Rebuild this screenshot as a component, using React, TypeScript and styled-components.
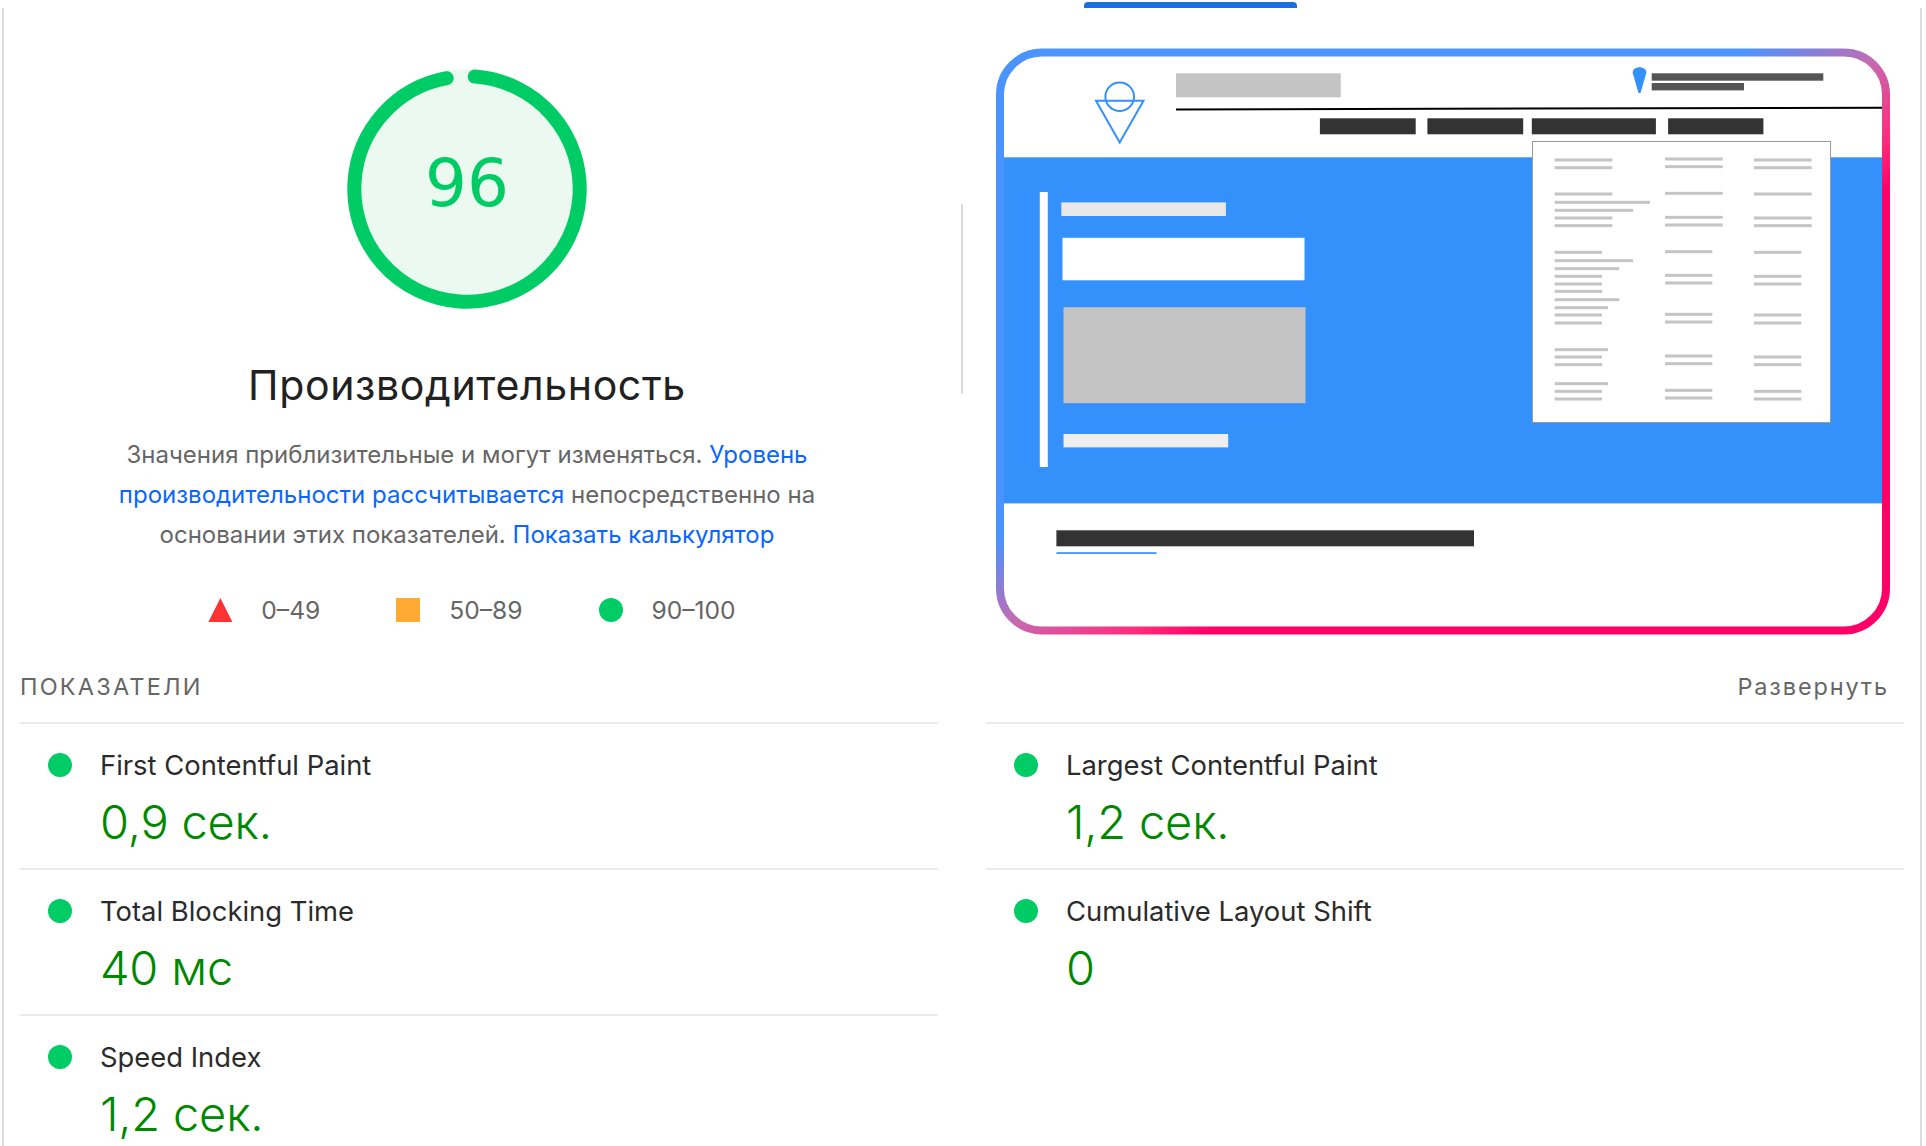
import React from 'react';
import styled, { createGlobalStyle } from 'styled-components';

const Global = createGlobalStyle`
  html, body { margin: 0; padding: 0; background: #fff; }
  * { box-sizing: border-box; }
`;

const Page = styled.div`
  width: 1926px;
  height: 1146px;
  overflow: hidden;
  padding-left: 4px;
  font-family: Inter, 'Noto Sans', sans-serif;
  background:
    linear-gradient(#dcdcdc, #dcdcdc) 2px 8px / 2px 100% no-repeat,
    linear-gradient(#dcdcdc, #dcdcdc) 1920px 8px / 2px 100% no-repeat,
    #fff;
`;
const Top = styled.section`
  display: flex;
  height: 658px;
`;
const ScoreColumn = styled.div`
  width: 926px;
  padding-top: 69px;
  display: flex;
  flex-direction: column;
  align-items: center;
`;
const Gauge = styled.div`
  position: relative;
  width: 240px;
  height: 240px;
  svg { display: block; }
`;
const ScoreValue = styled.span`
  position: absolute;
  inset: 0;
  display: flex;
  align-items: center;
  justify-content: center;
  padding-bottom: 11px;
  font-family: 'DejaVu Sans', sans-serif;
  font-size: 66px;
  color: #00cc66;
`;
const Title = styled.h1`
  margin: 46px 0 0;
  font-size: 41px;
  line-height: 60px;
  font-weight: 400;
  letter-spacing: 0.65px;
  color: #212121;
`;
const Description = styled.p`
  margin: 20px 0 0;
  font-size: 24px;
  line-height: 40px;
  text-align: center;
  color: #666666;
  white-space: nowrap;
`;
const Link = styled.a`
  color: #0a66ff;
  text-decoration: none;
`;
const Legend = styled.div`
  margin-top: 43px;
  padding-left: 10px;
  display: flex;
  gap: 76px;
`;
const LegendItem = styled.div`
  display: flex;
  align-items: center;
  gap: 29px;
  height: 24px;
  font-size: 24.6px;
  color: #666666;
`;
const Triangle = styled.i`
  width: 24px;
  height: 24px;
  background: #ff3333;
  clip-path: polygon(50% 0, 100% 100%, 0 100%);
`;
const Square = styled.i`
  width: 24px;
  height: 24px;
  background: #ffaa33;
`;
const Dot = styled.i`
  flex: none;
  width: 24px;
  height: 24px;
  border-radius: 50%;
  background: #00cc66;
`;
const Divider = styled.div`
  width: 2px;
  height: 190px;
  margin: 204px 0 0 31px;
  background: #dcdcdc;
`;
const Illustration = styled.svg`
  display: block;
  width: 930px;
  height: 658px;
  margin-left: 27px;
  flex: none;
`;
const Metrics = styled.section`
  width: 1884px;
  margin-left: 16px;
`;
const MetricsHeader = styled.div`
  height: 64px;
  padding: 0 15px 8px 0;
  display: flex;
  align-items: center;
  justify-content: space-between;
  font-size: 23.5px;
  color: #666666;
`;
const SectionLabel = styled.span`
  text-transform: uppercase;
  letter-spacing: 2.2px;
`;
const ExpandLabel = styled.span`
  letter-spacing: 1.85px;
`;
const MetricGrid = styled.div`
  display: grid;
  grid-template-columns: 918px 918px;
  column-gap: 48px;
`;
const Metric = styled.div`
  height: 146px;
  border-top: 2px solid #ebebeb;
  padding: 27px 0 0 28px;
  display: grid;
  grid-template-columns: 24px 1fr;
  grid-auto-rows: min-content;
  column-gap: 28px;
  align-items: center;
`;
const MetricName = styled.div`
  font-size: 27.4px;
  line-height: 28px;
  color: #2b2b2b;
`;
const MetricValue = styled.div`
  grid-column: 2;
  margin-top: 13px;
  font-size: 47px;
  font-weight: 350;
  line-height: 60px;
  letter-spacing: -0.2px;
  color: #008800;
`;

const blue = '#3490fa';
const dark = '#333333';
const soft = '#c4c4c4';

const col1: [number, number][] = [
  [90, 173], [113, 173], [192, 173], [217, 286], [241, 236], [264, 173], [287, 173],
  [367, 142], [392, 235], [416, 194], [439, 142], [462, 142], [484, 142], [509, 194],
  [533, 160], [555, 142], [579, 142], [659, 160], [681, 142], [704, 142], [761, 160],
  [784, 142], [807, 142],
];
const col2: [number, number][] = [
  [87, 173], [110, 173], [190, 173], [262, 173], [285, 173], [365, 142], [436, 142],
  [459, 142], [553, 142], [576, 142], [678, 142], [701, 142], [781, 142], [804, 142],
];
const col3: [number, number][] = [
  [90, 173], [113, 173], [192, 173], [264, 173], [287, 173], [367, 142], [439, 142],
  [462, 142], [555, 142], [579, 142], [681, 142], [704, 142], [784, 142], [807, 142],
];
const columns: { x: number; lines: [number, number][] }[] = [
  { x: 74, lines: col1 },
  { x: 405, lines: col2 },
  { x: 672, lines: col3 },
];

const metrics: [string, string][] = [
  ['First Contentful Paint', '0,9 сек.'],
  ['Largest Contentful Paint', '1,2 сек.'],
  ['Total Blocking Time', '40 мс'],
  ['Cumulative Layout Shift', '0'],
  ['Speed Index', '1,2 сек.'],
];

const R = 112.7;
const C = 2 * Math.PI * R;

export default function App() {
  return (
    <Page>
      <Global />
      <Top>
        <ScoreColumn>
          <Gauge>
            <svg width="240" height="240" viewBox="0 0 240 240">
              <circle cx="120" cy="120" r="119.7" fill="#ebf9f0" />
              <circle
                cx="120"
                cy="120"
                r={R}
                fill="none"
                stroke="#00cc66"
                strokeWidth="14"
                strokeLinecap="round"
                strokeDasharray={`${0.9594 * C} ${C}`}
                transform="rotate(-86.1 120 120)"
              />
            </svg>
            <ScoreValue>96</ScoreValue>
          </Gauge>
          <Title>Производительность</Title>
          <Description>
            Значения приблизительные и могут изменяться. <Link>Уровень</Link>
            <br />
            <Link>производительности рассчитывается</Link> непосредственно на
            <br />
            основании этих показателей. <Link>Показать калькулятор</Link>
          </Description>
          <Legend>
            <LegendItem><Triangle />0–49</LegendItem>
            <LegendItem><Square />50–89</LegendItem>
            <LegendItem><Dot />90–100</LegendItem>
          </Legend>
        </ScoreColumn>
        <Divider />
        <Illustration viewBox="990 0 930 658">
          <defs>
            <linearGradient id="frameStroke" x1="0" y1="0" x2="1" y2="1">
              <stop offset="0.42" stopColor="#4b93ff" />
              <stop offset="0.5" stopColor="#c66ab1" />
              <stop offset="0.58" stopColor="#ff2a7a" />
              <stop offset="0.62" stopColor="#ff0066" />
            </linearGradient>
          </defs>
          <path d="M1084 8 v-2 a4 4 0 0 1 4 -4 h205 a4 4 0 0 1 4 4 v2 z" fill="#1a6fe0" />

          <rect x="1004" y="157.3" width="879" height="346.1" fill={blue} />
          <rect x="1039.8" y="192" width="8" height="275" fill="#fff" />
          <rect x="1061.3" y="202.4" width="164.6" height="13.6" fill="#e8e8e8" />
          <rect x="1062.5" y="237.8" width="242" height="42.5" fill="#fff" />
          <rect x="1063.5" y="307.2" width="242" height="96" fill={soft} />
          <rect x="1063.5" y="434" width="164.7" height="13.4" fill="#eeeeee" />

          <circle cx="1119.7" cy="96.7" r="14.3" fill="none" stroke={blue} strokeWidth="2" />
          <path d="M1096 100.7 H1143.5 L1119.7 142.5 Z" fill="none" stroke={blue} strokeWidth="2" />
          <rect x="1176" y="73.3" width="164.7" height="24" fill={soft} />
          <path d="M1176 109.5 L1883 107.7" stroke="#000" strokeWidth="2" fill="none" />
          <path
            d="M1639.5 67.3 C1643.5 67.3 1646.5 69.5 1646.3 73 L1640.5 93 H1638.5 L1632.7 73 C1632.6 69.5 1635.5 67.3 1639.5 67.3 Z"
            fill={blue}
          />
          <rect x="1651.7" y="73.3" width="171.6" height="7.4" fill="#555555" />
          <rect x="1651.7" y="83" width="92.3" height="7.4" fill="#555555" />

          <rect x="1319.9" y="118.3" width="95.8" height="16" fill={dark} />
          <rect x="1427.4" y="118.3" width="95.8" height="16" fill={dark} />
          <rect x="1531.8" y="118.3" width="124.1" height="16" fill={dark} />
          <rect x="1668.1" y="118.3" width="95.3" height="16" fill={dark} />

          <rect x="1532.5" y="141.5" width="298" height="281" fill="#fff" stroke="#999999" strokeWidth="1" />
          {columns.map(c =>
            c.lines.map(([y, w], i) => (
              <rect
                key={`${c.x}-${i}`}
                x={1530 + c.x / 3}
                y={130 + y / 3 - 1.5}
                width={w / 3}
                height="3"
                fill={soft}
              />
            ))
          )}

          <rect x="1056.4" y="530.3" width="417.6" height="16" fill={dark} />
          <rect x="1056.4" y="552.2" width="100.1" height="1.7" fill={blue} />

          <rect
            x="1000"
            y="52.5"
            width="886"
            height="578"
            rx="42"
            fill="none"
            stroke="url(#frameStroke)"
            strokeWidth="8"
          />
        </Illustration>
      </Top>
      <Metrics>
        <MetricsHeader>
          <SectionLabel>Показатели</SectionLabel>
          <ExpandLabel>Развернуть</ExpandLabel>
        </MetricsHeader>
        <MetricGrid>
          {metrics.map(([name, value]) => (
            <Metric key={name}>
              <Dot />
              <MetricName>{name}</MetricName>
              <MetricValue>{value}</MetricValue>
            </Metric>
          ))}
        </MetricGrid>
      </Metrics>
    </Page>
  );
}
